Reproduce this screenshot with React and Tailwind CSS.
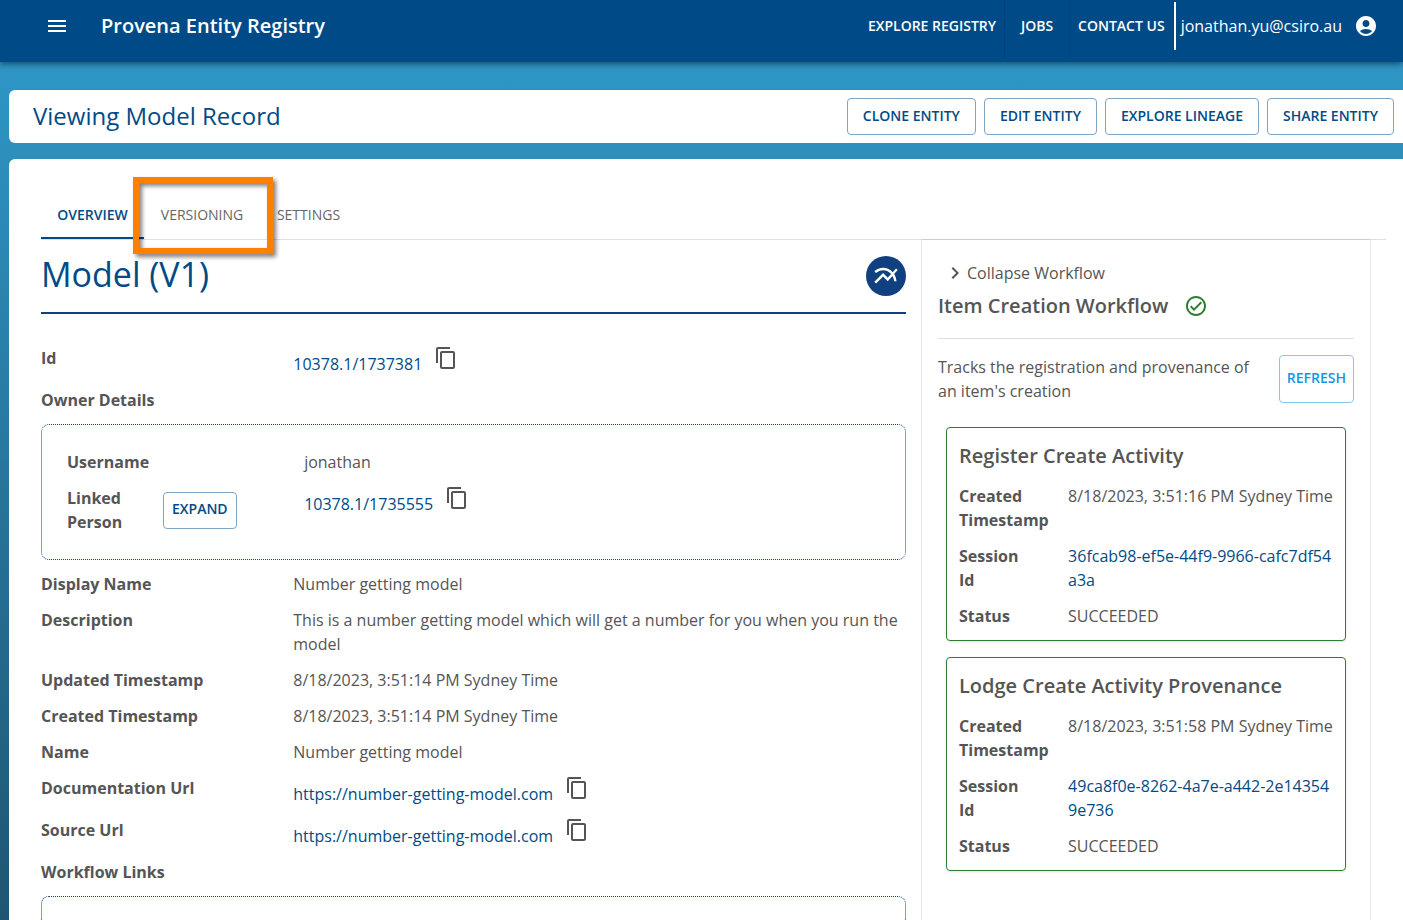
import React from "react";
import {
  MdMenu,
  MdAccountCircle,
  MdContentCopy,
  MdMultilineChart,
  MdChevronRight,
  MdOutlineCheckCircleOutline,
} from "react-icons/md";

const navItems = ["Explore Registry", "Jobs", "Contact Us"];
const actions = ["Clone Entity", "Edit Entity", "Explore Lineage", "Share Entity"];

const activities = [
  {
    title: "Register Create Activity",
    created: "8/18/2023, 3:51:16 PM Sydney Time",
    session: "36fcab98-ef5e-44f9-9966-cafc7df54a3a",
    status: "SUCCEEDED",
  },
  {
    title: "Lodge Create Activity Provenance",
    created: "8/18/2023, 3:51:58 PM Sydney Time",
    session: "49ca8f0e-8262-4a7e-a442-2e143549e736",
    status: "SUCCEEDED",
  },
];

function OutlinedButton({ children, className = "px-[15px]" }) {
  return (
    <button
      type="button"
      className={`h-[37px] rounded border border-[#80a5c3] pb-0.5 text-sm font-semibold uppercase text-[#004b87] ${className}`}
    >
      {children}
    </button>
  );
}

function Row({ label, children }) {
  return (
    <div className="grid grid-cols-[7fr_17fr]">
      <dt className="font-bold">{label}</dt>
      <dd className="min-w-0">{children}</dd>
    </div>
  );
}

function CopyLink({ text }) {
  return (
    <div className="flex items-start gap-3">
      <a href="#record" className="pt-1.5 text-[#004b87]">
        {text}
      </a>
      <button type="button" aria-label={`Copy ${text}`}>
        <MdContentCopy size={24} />
      </button>
    </div>
  );
}

function ActivityCard({ title, created, session, status }) {
  return (
    <section className="rounded border border-[#2e7d32] p-3 shadow-sm">
      <h3 className="text-xl/8 font-semibold">{title}</h3>
      <dl className="mt-3 flex flex-col gap-3">
        <Row label="Created Timestamp">
          <span className="whitespace-nowrap">{created}</span>
        </Row>
        <Row label={<span className="block w-16">Session Id</span>}>
          <a href="#session" className="break-all text-[#004b87]">
            {session}
          </a>
        </Row>
        <Row label="Status">{status}</Row>
      </dl>
    </section>
  );
}

export default function App() {
  return (
    <div className="flex min-h-screen flex-col bg-linear-to-b from-[#2f9bcc] to-[#1f5572] font-['Open_Sans',sans-serif] text-base/6 text-[#555555]">
      <header className="relative flex h-[62px] items-start bg-[#004b87] pl-[45px] pr-[25px] text-white shadow-[0_2px_6px_rgba(0,0,0,0.5)]">
        <div className="flex h-[52px] flex-1 items-center gap-8">
          <button type="button" aria-label="Open menu">
            <MdMenu size={24} />
          </button>
          <h1 className="text-xl font-semibold">Provena Entity Registry</h1>
        </div>
        <nav className="flex h-[58px]">
          {navItems.map((item) => (
            <a
              key={item}
              href="#nav"
              className="flex min-w-[65px] justify-center border-r border-[#00437b] px-2 pt-[14px] text-sm/6 font-semibold uppercase"
            >
              {item}
            </a>
          ))}
        </nav>
        <div className="mt-0.5 flex h-12 items-center gap-3 border-l-2 border-white pl-[5px]">
          <span>jonathan.yu@csiro.au</span>
          <button type="button" aria-label="Account">
            <MdAccountCircle size={24} />
          </button>
        </div>
      </header>

      <main className="flex flex-1 flex-col gap-4 pl-[9px] pt-7">
        <div className="flex items-center justify-between rounded-l-md bg-white py-2 pl-6 pr-[9px]">
          <h2 className="pb-0.5 text-2xl text-[#004b87]">Viewing Model Record</h2>
          <div className="flex gap-2">
            {actions.map((action) => (
              <OutlinedButton key={action}>{action}</OutlinedButton>
            ))}
          </div>
        </div>

        <div className="flex flex-1 flex-col rounded-tl-md bg-white pl-8 pr-[17px] pt-8">
          <div role="tablist" className="flex h-[49px] border-b border-[#dfdfdf] text-sm uppercase text-[#666666]">
            <button
              type="button"
              role="tab"
              aria-selected="true"
              className="h-12 w-[103px] border-b-2 border-[#004b87] pt-0.5 font-semibold uppercase text-[#004b87]"
            >
              Overview
            </button>
            <div className="relative h-12 w-[116px]">
              <button type="button" role="tab" aria-selected="false" className="h-full w-full uppercase">
                Versioning
              </button>
              <div className="pointer-events-none absolute -bottom-[15px] -left-[11px] -right-[13px] -top-[14px] border-6 border-[#ff8000] drop-shadow-[3px_3px_2px_rgba(0,0,0,0.5)]" />
            </div>
            <button type="button" role="tab" aria-selected="false" className="h-12 w-[97px] uppercase">
              Settings
            </button>
          </div>

          <div className="flex flex-1 gap-[15px] pr-[15px]">
            <section className="flex min-w-0 flex-1 flex-col">
              <div className="flex items-center justify-between border-b-2 border-[#10407f] py-4">
                <h2 className="pb-1 text-[34px]/9 text-[#004b87]">Model (V1)</h2>
                <div className="flex size-10 items-center justify-center rounded-full bg-[#10407f] text-white">
                  <MdMultilineChart size={28} />
                </div>
              </div>

              <dl className="mt-8 flex flex-1 flex-col gap-3">
                <Row label="Id">
                  <CopyLink text="10378.1/1737381" />
                </Row>
                <dt className="font-bold">Owner Details</dt>
                <dd className="rounded-lg border border-dotted border-[#10407f] p-[25px]">
                  <dl className="flex flex-col gap-3">
                    <Row label="Username">jonathan</Row>
                    <Row
                      label={
                        <div className="flex items-center">
                          <span className="w-24 pr-8">Linked Person</span>
                          <OutlinedButton className="px-2">Expand</OutlinedButton>
                        </div>
                      }
                    >
                      <CopyLink text="10378.1/1735555" />
                    </Row>
                  </dl>
                </dd>
                <Row label="Display Name">Number getting model</Row>
                <Row label="Description">
                  This is a number getting model which will get a number for you when you run the model
                </Row>
                <Row label="Updated Timestamp">8/18/2023, 3:51:14 PM Sydney Time</Row>
                <Row label="Created Timestamp">8/18/2023, 3:51:14 PM Sydney Time</Row>
                <Row label="Name">Number getting model</Row>
                <Row label="Documentation Url">
                  <CopyLink text="https://number-getting-model.com" />
                </Row>
                <Row label="Source Url">
                  <CopyLink text="https://number-getting-model.com" />
                </Row>
                <dt className="font-bold">Workflow Links</dt>
                <dd className="min-h-6 flex-1 rounded-t-lg border border-b-0 border-dotted border-[#10407f]" />
              </dl>
            </section>

            <aside className="-mt-px w-[450px] border border-b-0 border-t-[#cfcbdc] border-x-[#e6e6f5] p-4">
              <button type="button" className="flex h-[34px] items-center pl-[5px]">
                <MdChevronRight size={24} />
                Collapse Workflow
              </button>
              <div className="flex items-center gap-4 border-b border-[#e0e0e0] pb-4">
                <h2 className="text-xl/8 font-semibold">Item Creation Workflow</h2>
                <MdOutlineCheckCircleOutline size={24} className="text-[#2e7d32]" />
              </div>
              <div className="flex gap-6 pt-4">
                <p className="flex-1">Tracks the registration and provenance of an item's creation</p>
                <button
                  type="button"
                  className="h-12 rounded border border-[#80c9f0] px-[7px] pb-0.5 text-sm font-semibold uppercase text-[#1497e5]"
                >
                  Refresh
                </button>
              </div>
              <div className="mt-6 flex flex-col gap-4 px-2">
                {activities.map((activity) => (
                  <ActivityCard key={activity.title} {...activity} />
                ))}
              </div>
            </aside>
          </div>
        </div>
      </main>
    </div>
  );
}
